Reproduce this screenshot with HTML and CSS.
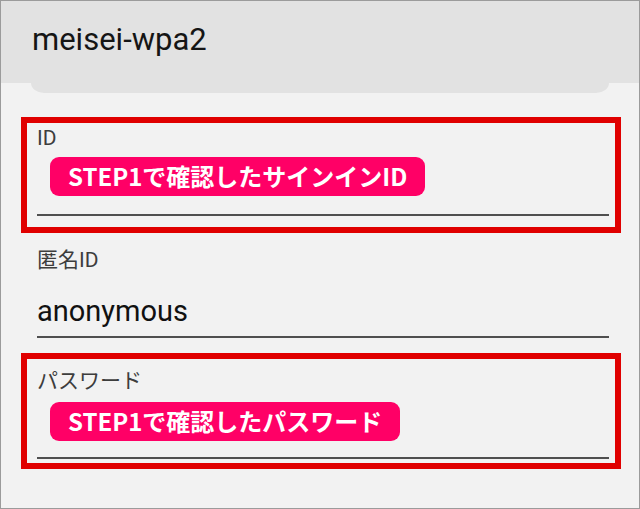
FILE: index.html
```html
<!DOCTYPE html>
<html lang="ja">
<head>
<meta charset="UTF-8">
<meta name="viewport" content="width=device-width, initial-scale=1.0">
<title>meisei-wpa2</title>
<link rel="stylesheet" href="styles.css">
</head>
<body>
<div class="screen">
  <div class="header">
    <h1 class="title">meisei-wpa2</h1>
  </div>
  <div class="tab"></div>

  <div class="mark mark-first">
    <div class="field">
      <div class="label">ID</div>
      <span class="badge">STEP1で確認したサインインID</span>
      <div class="line"></div>
    </div>
  </div>

  <div class="field field-plain">
    <div class="label">匿名ID</div>
    <div class="value">anonymous</div>
    <div class="line"></div>
  </div>

  <div class="mark mark-second">
    <div class="field">
      <div class="label">パスワード</div>
      <span class="badge">STEP1で確認したパスワード</span>
      <div class="line"></div>
    </div>
  </div>
</div>
</body>
</html>
```

FILE: styles.css
```css
body {
  margin: 0;
  font-family: Roboto, "Noto Sans CJK JP", sans-serif;
}
.screen {
  width: 640px;
  height: 509px;
  box-sizing: border-box;
  border: 1px solid #9b9b9b;
  background: #f2f2f2;
  overflow: hidden;
}
.header {
  height: 82px;
  background: #e2e2e2;
  padding: 21px 0 0 31px;
  box-sizing: border-box;
}
.title {
  margin: 0;
  font-size: 31px;
  font-weight: 400;
  line-height: 36px;
  color: #151515;
}
/* 標題下の丸い部分 */
.tab {
  height: 10px;
  margin: 0 30px;
  background: #e2e2e2;
  border-radius: 0 0 13px 13px / 0 0 10px 10px;
}

/* 赤枠（注釈） */
.mark {
  border: 6px solid #e00000;
  margin: 24px 18px 0 20px;
}
.mark .field {
  margin: 0 6px 0 10px;
}
.mark-first .field {
  padding: 3px 0 11px;
}
.mark-first .badge {
  margin-top: 7px;
}
.mark-first .line {
  margin-top: 18px;
}
.mark-second {
  margin-top: 15px;
}
.mark-second .field {
  padding: 10px 0 4px;
}
.mark-second .badge {
  margin-top: 9px;
}
.mark-second .line {
  margin-top: 16px;
}

.field-plain {
  margin: 15px 30px 0 36px;
}
.label {
  font-size: 21px;
  line-height: 24px;
  color: #3d3d3d;
}
.value {
  margin-top: 22px;
  font-size: 29px;
  line-height: 34px;
  color: #111;
}
.field-plain .line {
  margin-top: 8px;
}
.line {
  height: 2px;
  background: #4f4f4f;
}
.badge {
  display: inline-block;
  margin-left: 13px;
  height: 39px;
  padding: 0 18px;
  border-radius: 9px;
  background: #ff0066;
  color: #fff;
  font-family: "Noto Sans CJK JP", sans-serif;
  font-weight: 700;
  font-size: 24px;
  line-height: 37px;
  vertical-align: top;
}
```
